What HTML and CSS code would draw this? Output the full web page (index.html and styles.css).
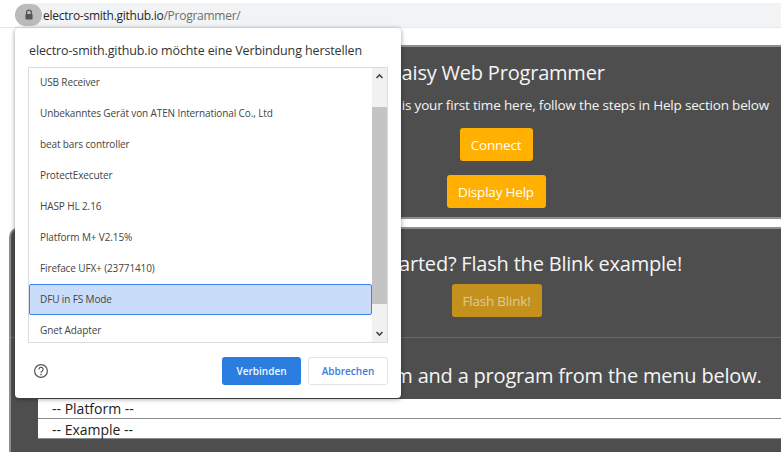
FILE: index.html
```html
<!DOCTYPE html>
<html lang="de">
<head>
<meta charset="utf-8">
<title>Daisy Web Programmer</title>
<link rel="stylesheet" href="styles.css">
</head>
<body>
<header class="browser-bar">
  <div class="address">
    <span class="lock-pill">
      <svg width="12" height="12" viewBox="0 0 12 12"><path d="M3.6 5V3.6a2.4 2.4 0 0 1 4.8 0V5" fill="none" stroke="#555" stroke-width="1.2"/><rect x="2.4" y="5" width="7.2" height="5.6" rx=".8" fill="#555"/></svg>
    </span>
    <span class="url"><span class="host">electro-smith.github.io</span>/Programmer/</span>
  </div>
</header>
<main class="page">
  <section class="panel panel-intro">
    <h2 class="headline">Daisy Web Programmer</h2>
    <p class="lead">If this is your first time here, follow the steps in Help section below</p>
    <button class="btn btn-connect">Connect</button>
    <button class="btn btn-help">Display Help</button>
  </section>
  <section class="panel panel-main">
    <h2 class="headline headline-blink">Getting started? Flash the Blink example!</h2>
    <button class="btn btn-flash">Flash Blink!</button>
    <hr class="rule">
    <h2 class="headline headline-select">Or select a platform and a program from the menu below.</h2>
    <div class="select-row select-first">-- Platform --</div>
    <div class="select-row select-second">-- Example --</div>
  </section>
</main>
<aside class="dialog">
  <div class="dialog-title">electro-smith.github.io möchte eine Verbindung herstellen</div>
  <div class="listbox">
    <ul class="devices">
      <li class="device">USB Receiver</li>
      <li class="device">Unbekanntes Gerät von ATEN International Co., Ltd</li>
      <li class="device">beat bars controller</li>
      <li class="device">ProtectExecuter</li>
      <li class="device">HASP HL 2.16</li>
      <li class="device">Platform M+ V2.15%</li>
      <li class="device">Fireface UFX+ (23771410)</li>
      <li class="device selected">DFU in FS Mode</li>
      <li class="device">Gnet Adapter</li>
    </ul>
    <div class="scrollbar">
      <svg class="arrow" width="15" height="17" viewBox="0 0 15 17"><path d="M4.5 10 7.5 7l3 3" fill="none" stroke="#444" stroke-width="1.6"/></svg>
      <div class="track"><div class="thumb"></div></div>
      <svg class="arrow" width="15" height="17" viewBox="0 0 15 17"><path d="M4.5 7l3 3 3-3" fill="none" stroke="#444" stroke-width="1.6"/></svg>
    </div>
  </div>
  <div class="dialog-footer">
    <svg class="help-icon" width="16" height="16" viewBox="0 0 16 16"><circle cx="8" cy="8" r="6.4" fill="none" stroke="#555" stroke-width="1.2"/><path d="M5.9 6.4a2.1 2.1 0 1 1 3.2 1.8c-.7.4-1.1.8-1.1 1.6" fill="none" stroke="#555" stroke-width="1.2"/><circle cx="8" cy="11.6" r=".8" fill="#555"/></svg>
    <button class="action primary">Verbinden</button>
    <button class="action secondary">Abbrechen</button>
  </div>
</aside>
</body>
</html>
```
FILE: styles.css
```css
html, body {
  margin: 0;
  padding: 0;
  width: 781px;
  height: 452px;
  overflow: hidden;
  background: #fff;
  font-family: "Open Sans", "Noto Sans", sans-serif;
}
.browser-bar {
  height: 28px;
  padding: 3px 0 0 15px;
  box-sizing: border-box;
  border-bottom: 1px solid #e8e8e8;
}
.address {
  display: flex;
  align-items: center;
  height: 24px;
  background: #f1f3f4;
  border-radius: 12px 0 0 12px;
  font-size: 12px;
  letter-spacing: -0.26px;
  color: #6b6f73;
}
.lock-pill {
  display: flex;
  align-items: center;
  justify-content: center;
  width: 27px;
  height: 22px;
  border-radius: 11px;
  background: #b9bbbd;
}
.url { margin-left: 1px; }
.host { color: #26282b; }

.page { display: flex; flex-direction: column; }
.panel {
  display: flex;
  flex-direction: column;
  align-items: center;
  background: #4e4e4e;
  color: #f5f5f5;
  border-top: 2px solid #8e8e8e;
  box-sizing: border-box;
}
.panel-intro {
  margin: 17px 0 0 30px;
  width: 932px;
  height: 174px;
  padding-top: 12px;
  border-bottom: 2px solid #8e8e8e;
}
.panel-main {
  margin: 8px 0 0 9px;
  width: 973px;
  height: 240px;
  padding-top: 21px;
  border-left: 2px solid #8e8e8e;
  border-radius: 10px 0 0 0;
}
.headline {
  margin: 0;
  font-size: 20px;
  font-weight: 400;
  letter-spacing: -0.2px;
  line-height: 27px;
  white-space: nowrap;
}
.lead {
  margin: 9px 0 0;
  padding-left: 142px;
  font-size: 13.5px;
  letter-spacing: -0.18px;
  line-height: 20px;
  white-space: nowrap;
}
.btn {
  display: block;
  border: 0;
  border-radius: 3px;
  font-family: inherit;
  font-size: 13.5px;
  letter-spacing: -0.2px;
  color: #fff;
  background: #ffb000;
  height: 33px;
  padding: 0;
}
.btn-connect { width: 73px; margin-top: 13px; }
.btn-help { width: 99px; margin-top: 14px; }
.btn-flash {
  width: 90px;
  margin-top: 7px;
  background: #c4921c;
  color: #dcc9a0;
}
.rule {
  align-self: stretch;
  margin: 20px 0 0;
  border: 0;
  height: 1px;
  background: #6a6a6a;
}
.headline-select { margin-top: 24px; }
.select-row {
  align-self: stretch;
  margin: 0 28px 0 27px;
  height: 20px;
  box-sizing: border-box;
  line-height: 19px;
  padding-left: 14px;
  background: #fff;
  border-bottom: 1px solid #8a8a8a;
  color: #222;
  font-size: 14px;
}
.select-first { margin-top: 10px; }
.select-second { line-height: 21px; }

.dialog {
  position: absolute;
  left: 15px;
  top: 28px;
  width: 386px;
  height: 370px;
  box-sizing: border-box;
  padding: 14px 13px 0;
  background: #fff;
  border-radius: 4px;
  box-shadow: 0 1px 5px rgba(0, 0, 0, .4);
  color: #333;
}
.dialog-title {
  padding-left: 1px;
  font-size: 12.5px;
  letter-spacing: -0.12px;
  line-height: 18px;
  white-space: nowrap;
}
.listbox {
  display: flex;
  margin-top: 7px;
  height: 276px;
  box-sizing: border-box;
  border: 1px solid #dcdcdc;
  overflow: hidden;
}
.devices { flex: 1; margin: 0; padding: 0; list-style: none; }
.device {
  height: 31px;
  line-height: 29px;
  box-sizing: border-box;
  padding-left: 10px;
  border: 1px solid transparent;
  font-size: 10px;
  letter-spacing: -0.12px;
  color: #444;
  white-space: nowrap;
}
.device:first-child { margin-top: -1px; }
.selected {
  background: #c9dcf9;
  border-color: #3c84ea;
  border-radius: 2px;
}
.scrollbar {
  display: flex;
  flex-direction: column;
  width: 15px;
  background: #f1f1f1;
}
.arrow { flex: none; }
.track { flex: 1; padding-top: 22px; }
.thumb { height: 197px; background: #c4c4c4; }
.dialog-footer {
  display: flex;
  align-items: center;
  margin-top: 14px;
}
.help-icon { margin-right: auto; margin-left: 5px; }
.action {
  height: 28px;
  padding: 0;
  border-radius: 3px;
  font-family: inherit;
  font-size: 10px;
  font-weight: 600;
}
.primary { width: 79px; background: #2b7de0; color: #f4f8fe; border: 0; }
.secondary {
  width: 80px;
  margin-left: 7px;
  background: #fff;
  border: 1px solid #e3e3e3;
  color: #4279de;
}
```
